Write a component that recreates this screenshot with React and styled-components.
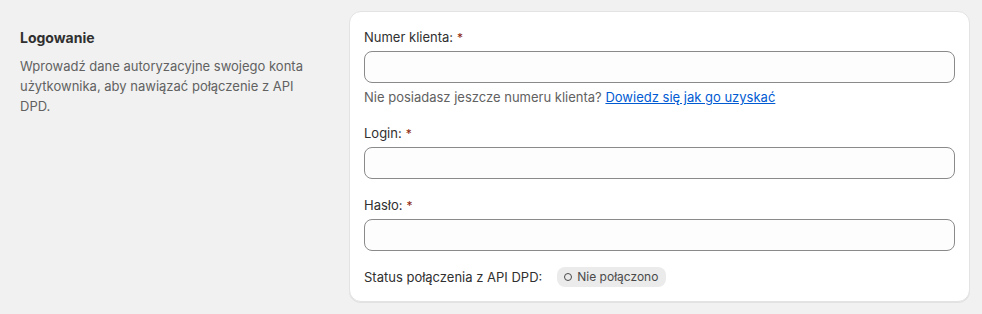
import React from "react";
import styled, { createGlobalStyle } from "styled-components";

const Global = createGlobalStyle`
  html, body { margin: 0; padding: 0; background: #f1f1f1; }
  body {
    font-family: Inter, "Noto Sans", "Liberation Sans", sans-serif;
    font-size: 13px;
    line-height: 20px;
    color: #303030;
    -webkit-font-smoothing: antialiased;
  }
`;

const Page = styled.div`
  display: flex;
  align-items: flex-start;
  padding: 11px 12px 12px 20px;
  gap: 29px;
`;

const Annotation = styled.div`
  width: 300px;
  flex-shrink: 0;
  padding-top: 17px;
  display: flex;
  flex-direction: column;
  gap: 8px;
`;

const Title = styled.h2`
  margin: 0;
  font-size: 14px;
  line-height: 20px;
  font-weight: 650;
  color: #303030;
`;

const Description = styled.p`
  margin: 0;
  color: #616161;
`;

const Card = styled.div`
  flex: 1;
  background: #fff;
  border-radius: 12px;
  padding: 15px 14px 14px 14px;
  border: 1px solid #e3e3e3;
  box-shadow: 0 1px 0 0 rgba(26, 26, 26, 0.07);
  display: flex;
  flex-direction: column;
  gap: 16px;
`;

const Field = styled.div`
  display: flex;
  flex-direction: column;
`;

const Label = styled.label`
  height: 20px;
  margin-bottom: 4px;
  color: #303030;
`;

const Required = styled.span`
  color: #8e1f0b;
  margin-left: 4px;
  font-size: 12px;
  line-height: 0;
`;

const Input = styled.input`
  box-sizing: border-box;
  height: 32px;
  width: 100%;
  border: 1px solid #8a8a8a;
  border-radius: 8px;
  background: #fdfdfd;
  font: inherit;
  padding: 0 12px;
  outline: none;
`;

const Help = styled.div`
  margin-top: 4px;
  color: #616161;
`;

const Link = styled.a`
  color: #005bd3;
  text-decoration: underline;
`;

const StatusRow = styled.div`
  display: flex;
  align-items: center;
  gap: 15px;
  height: 20px;
  color: #303030;
`;

const Badge = styled.span`
  display: inline-flex;
  align-items: center;
  gap: 5px;
  height: 20px;
  padding: 0 8px 0 7px;
  border-radius: 8px;
  background: #ebebeb;
  color: #4a4a4a;
  font-size: 12px;
`;

const Dot = styled.span`
  width: 6px;
  height: 6px;
  border: 1.3px solid #4a4a4a;
  border-radius: 50%;
  box-sizing: content-box;
`;

function TextField({ label, help }) {
  return (
    <Field>
      <Label>
        {label}
        <Required>*</Required>
      </Label>
      <Input type="text" />
      {help}
    </Field>
  );
}

export default function App() {
  return (
    <>
      <Global />
      <Page>
        <Annotation>
          <Title>Logowanie</Title>
          <Description>
            Wprowadź dane autoryzacyjne swojego konta użytkownika, aby nawiązać
            połączenie z API DPD.
          </Description>
        </Annotation>
        <Card>
          <TextField
            label="Numer klienta:"
            help={
              <Help>
                Nie posiadasz jeszcze numeru klienta?{" "}
                <Link href="#">Dowiedz się jak go uzyskać</Link>
              </Help>
            }
          />
          <TextField label="Login:" />
          <TextField label="Hasło:" />
          <StatusRow>
            <span>Status połączenia z API DPD:</span>
            <Badge>
              <Dot />
              Nie połączono
            </Badge>
          </StatusRow>
        </Card>
      </Page>
    </>
  );
}
